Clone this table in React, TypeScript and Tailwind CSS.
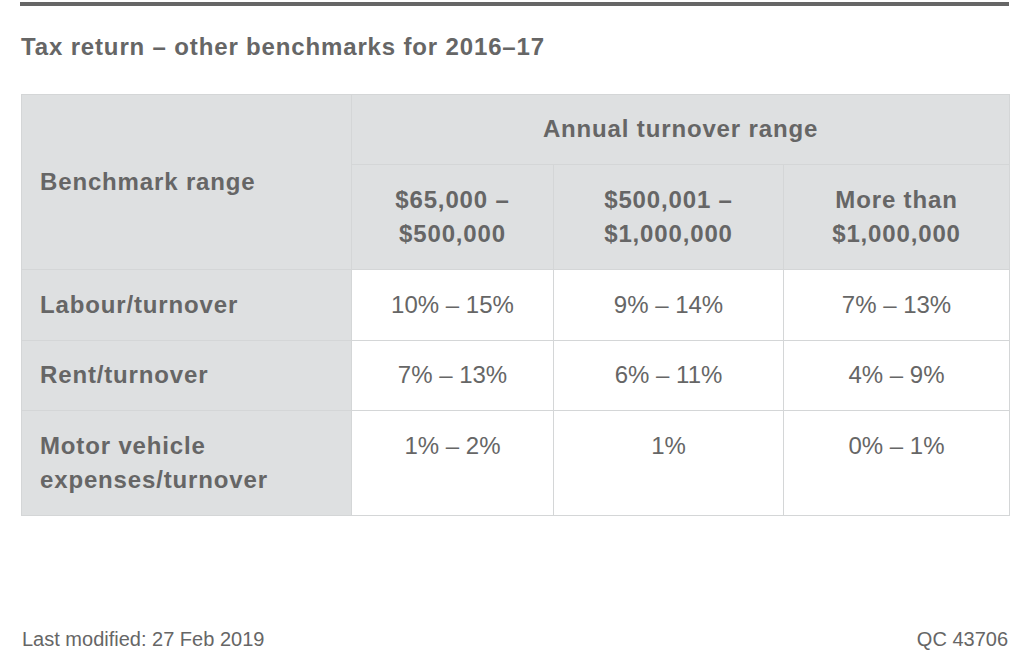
import React from "react";

type Row = {
  label: string;
  values: string[];
};

const rows: Row[] = [
  { label: "Labour/turnover", values: ["10% – 15%", "9% – 14%", "7% – 13%"] },
  { label: "Rent/turnover", values: ["7% – 13%", "6% – 11%", "4% – 9%"] },
  { label: "Motor vehicle expenses/turnover", values: ["1% – 2%", "1%", "0% – 1%"] },
];

const cell = "border border-[#d4d6d7] px-4 py-[17.5px] leading-[34.5px]";
const head = "font-bold tracking-[0.85px]";

const App = () => {
  return (
    <div
      className="w-[1024px] h-[670px] bg-white pl-5 pr-[15px] text-[#666]"
      style={{ fontFamily: '"Liberation Sans", Arial, Helvetica, sans-serif' }}
    >
      <div className="h-1 bg-[#666] mt-[2px]" />
      <h2 className={`text-[24px] leading-[34.5px] mt-[24px] pl-px ${head}`}>
        Tax return – other benchmarks for 2016–17
      </h2>

      <table className="table-fixed border-collapse w-[988px] ml-px mt-[29px] text-[24px]">
        <colgroup>
          <col className="w-[330px]" />
          <col className="w-[202px]" />
          <col className="w-[230px]" />
          <col className="w-[226px]" />
        </colgroup>
        <thead>
          <tr className="bg-[#dee0e1]">
            <th rowSpan={2} className={`${cell} ${head} pl-[18px] text-left align-middle`}>
              Benchmark range
            </th>
            <th colSpan={3} className={`${cell} ${head} text-center`}>
              Annual turnover range
            </th>
          </tr>
          <tr className="bg-[#dee0e1]">
            <th className={`${cell} ${head} text-center`}>
              $65,000 –<br />$500,000
            </th>
            <th className={`${cell} ${head} text-center`}>
              $500,001 –<br />$1,000,000
            </th>
            <th className={`${cell} ${head} text-center`}>
              More than<br />$1,000,000
            </th>
          </tr>
        </thead>
        <tbody>
          {rows.map((row) => (
            <tr key={row.label}>
              <th className={`${cell} ${head} pl-[18px] bg-[#dee0e1] text-left align-top`}>
                {row.label}
              </th>
              {row.values.map((v, i) => (
                <td key={i} className={`${cell} text-center align-top font-normal`}>
                  {v}
                </td>
              ))}
            </tr>
          ))}
        </tbody>
      </table>

      <div className="flex justify-between text-[20px] leading-[28px] mt-[109px] pl-[2px] pr-px">
        <span>Last modified: 27 Feb 2019</span>
        <span>QC 43706</span>
      </div>
    </div>
  );
};

export default App;
